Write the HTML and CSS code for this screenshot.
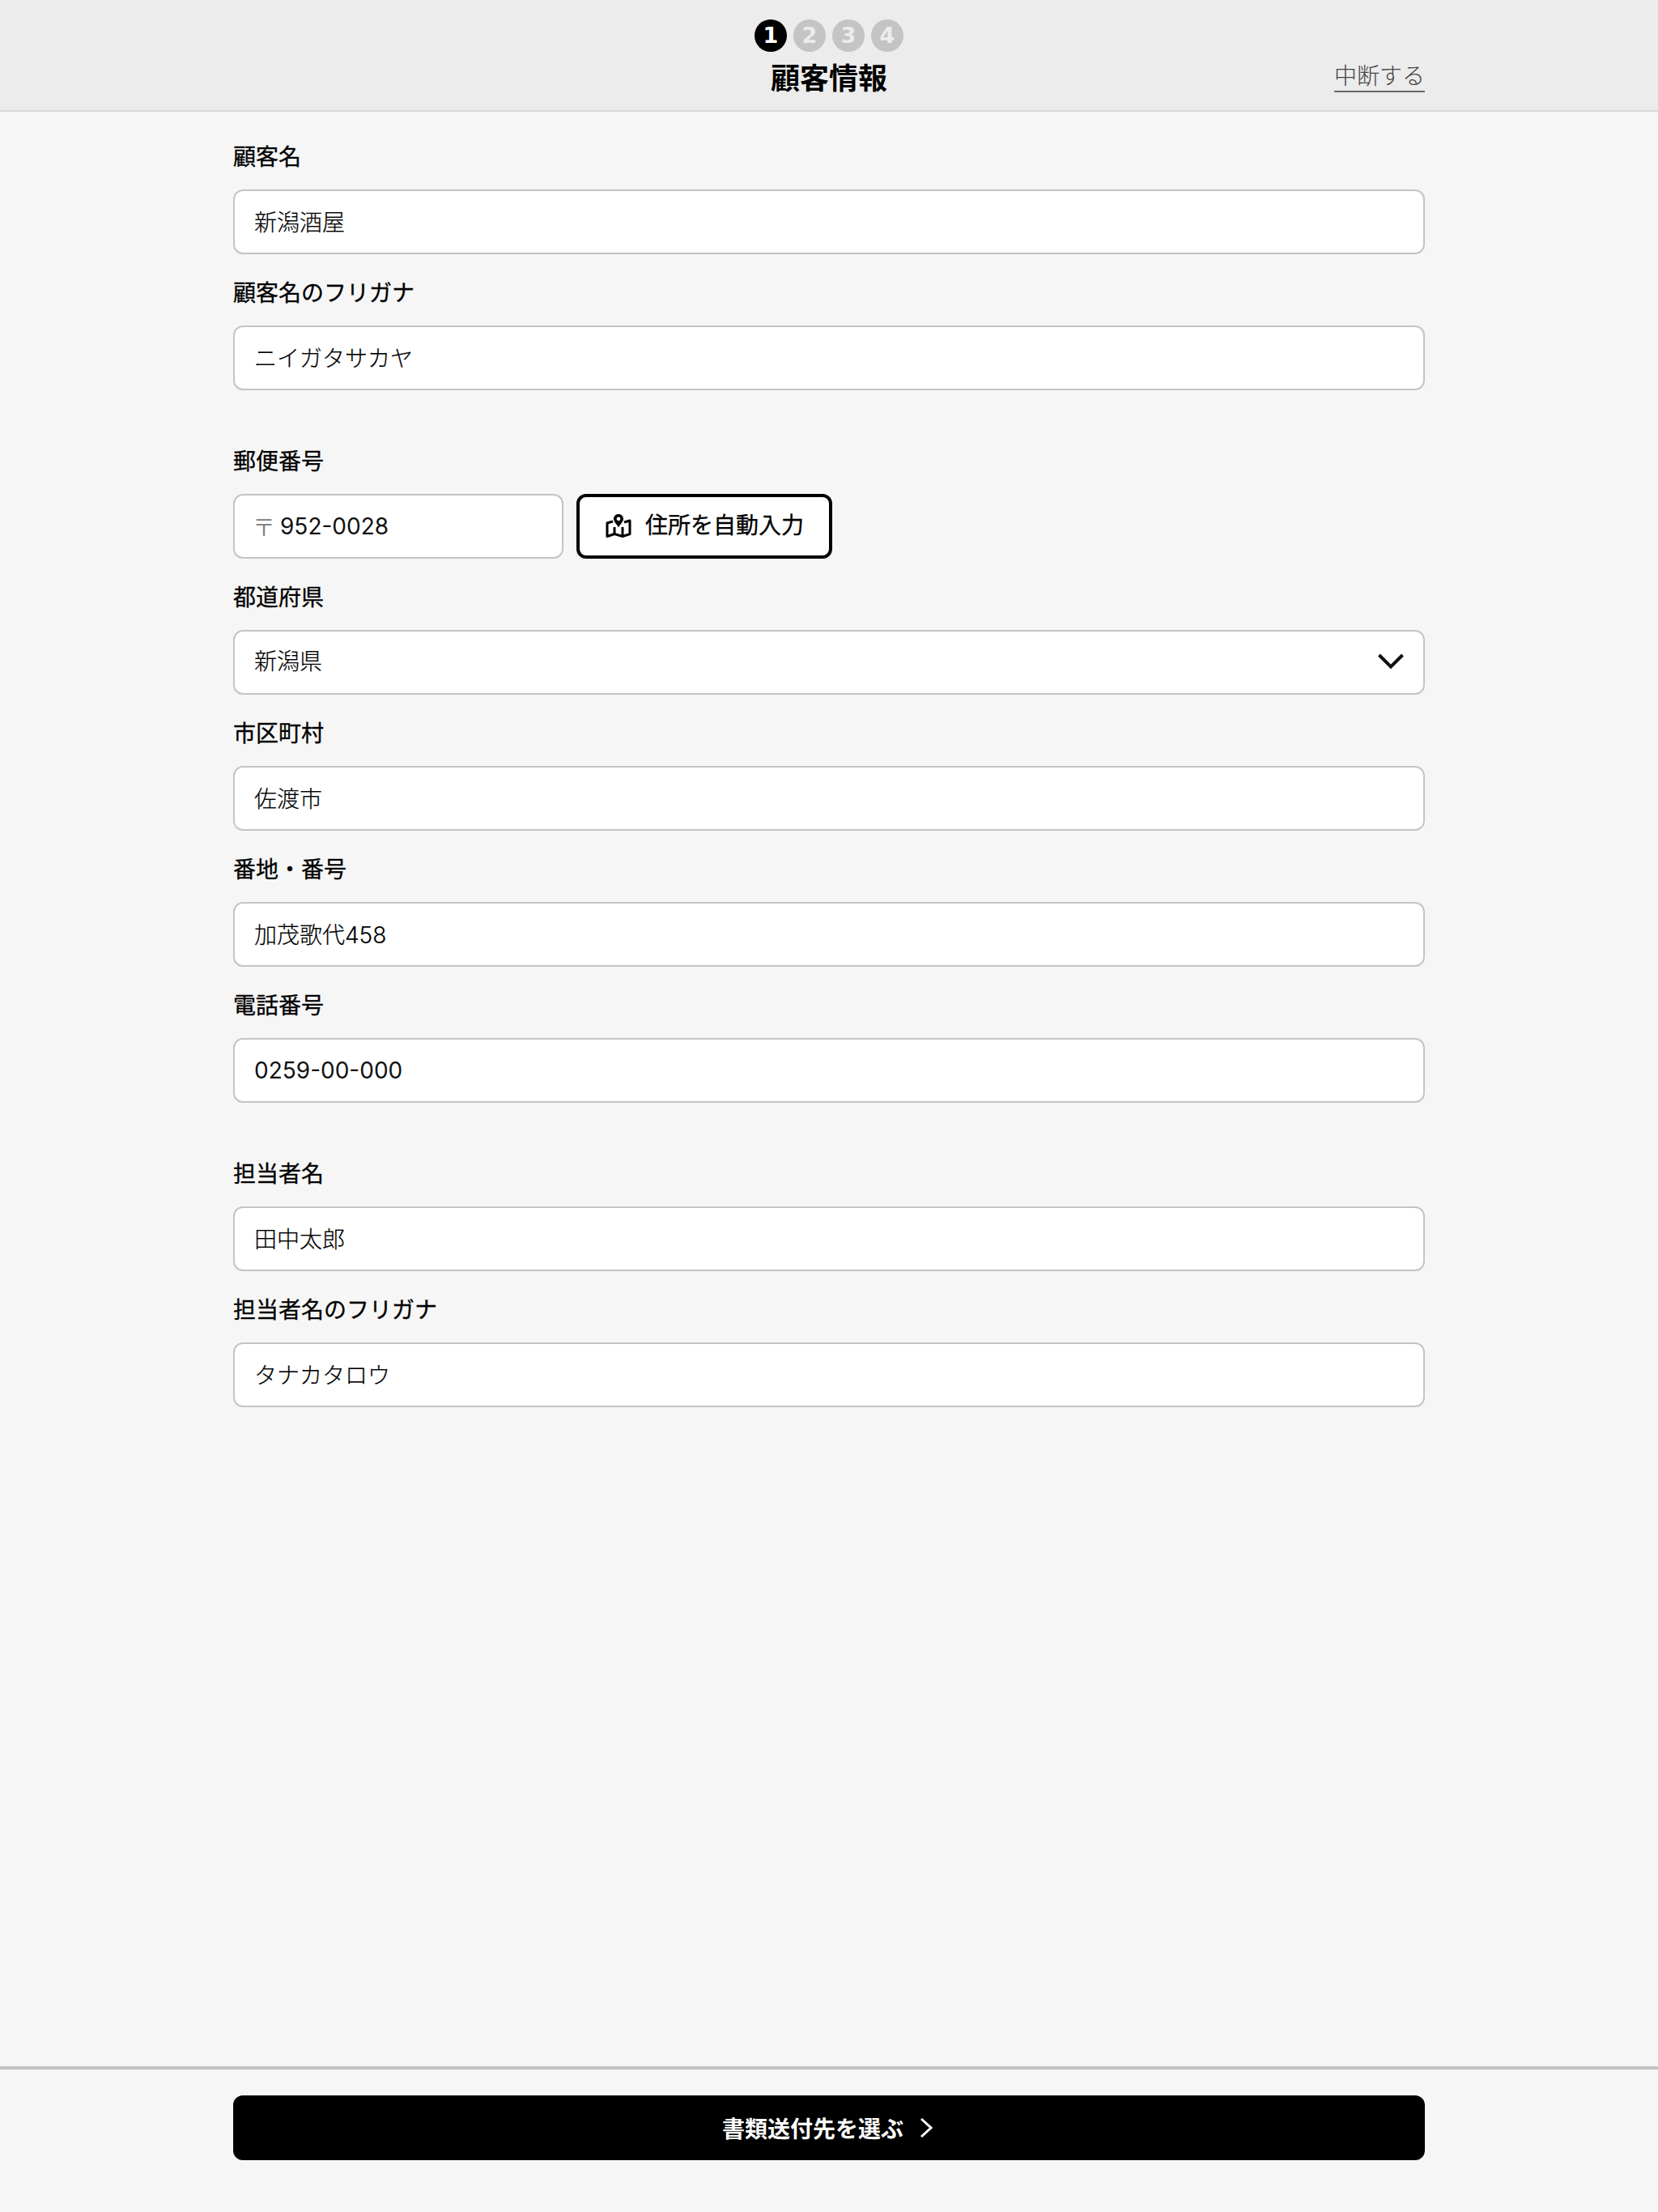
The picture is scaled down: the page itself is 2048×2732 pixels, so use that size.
FILE: index.html
```html
<!DOCTYPE html>
<html lang="ja">
<head>
    <meta charset="UTF-8">
    <meta name="viewport" content="width=device-width, initial-scale=1.0">
    <title>顧客情報</title>
    <link rel="stylesheet" href="styles.css">
</head>
<body>
    <header class="header">
        <div class="header-inner">
            <div class="header-side"></div>
            <div class="header-center">
                <ol class="steps">
                    <li class="step step-active">1</li>
                    <li class="step">2</li>
                    <li class="step">3</li>
                    <li class="step">4</li>
                </ol>
                <h1 class="title">顧客情報</h1>
            </div>
            <div class="header-side header-side-right">
                <a class="abort" href="#">中断する</a>
            </div>
        </div>
    </header>

    <main class="form">
        <section class="group">
            <div class="field">
                <label class="label" for="name">顧客名</label>
                <input class="input" id="name" type="text" value="新潟酒屋">
            </div>
            <div class="field">
                <label class="label" for="name-kana">顧客名のフリガナ</label>
                <input class="input" id="name-kana" type="text" value="ニイガタサカヤ">
            </div>
        </section>

        <section class="group">
            <div class="field">
                <label class="label" for="zip">郵便番号</label>
                <div class="zip-row">
                    <div class="zip-box">
                        <span class="zip-mark">〒</span>
                        <input class="zip-input" id="zip" type="text" value="952-0028">
                    </div>
                    <button class="zip-button" type="button">
                        <svg class="map-icon" viewBox="0 0 32 32" width="32" height="32" fill="none" stroke="#000" stroke-width="3">
                            <path d="M9 10 L2 12 V28.5 L11 25.5 L21 28.5 L30 25.5 V9 L23 11" stroke-linejoin="round"/>
                            <path d="M11 17 V25.5 M21 17 V28.5"/>
                            <path d="M16 1 C12.4 1 10 3.6 10 6.8 C10 10.6 14.2 14 16 17.5 C17.8 14 22 10.6 22 6.8 C22 3.6 19.6 1 16 1 Z" fill="#000" stroke="none"/>
                            <circle cx="16" cy="6.8" r="2.4" fill="#fff" stroke="none"/>
                        </svg>
                        <span>住所を自動入力</span>
                    </button>
                </div>
            </div>
            <div class="field">
                <label class="label" for="pref">都道府県</label>
                <div class="select-wrap">
                    <select class="input select" id="pref">
                        <option>新潟県</option>
                    </select>
                    <svg class="select-arrow" viewBox="0 0 32 20" width="32" height="20" fill="none" stroke="#111" stroke-width="4">
                        <path d="M1.5 2 L16 16.5 L30.5 2"/>
                    </svg>
                </div>
            </div>
            <div class="field">
                <label class="label" for="city">市区町村</label>
                <input class="input" id="city" type="text" value="佐渡市">
            </div>
            <div class="field">
                <label class="label" for="addr">番地・番号</label>
                <input class="input" id="addr" type="text" value="加茂歌代458">
            </div>
            <div class="field">
                <label class="label" for="tel">電話番号</label>
                <input class="input input-num" id="tel" type="text" value="0259-00-000">
            </div>
        </section>

        <section class="group">
            <div class="field">
                <label class="label" for="staff">担当者名</label>
                <input class="input" id="staff" type="text" value="田中太郎">
            </div>
            <div class="field">
                <label class="label" for="staff-kana">担当者名のフリガナ</label>
                <input class="input" id="staff-kana" type="text" value="タナカタロウ">
            </div>
        </section>
    </main>

    <footer class="footer">
        <button class="next" type="button">
            <span>書類送付先を選ぶ</span>
            <svg viewBox="0 0 16 26" width="16" height="26" fill="none" stroke="#fff" stroke-width="3">
                <path d="M2 2 L14 13 L2 24"/>
            </svg>
        </button>
    </footer>
</body>
</html>
```

FILE: styles.css
```css
* {
    box-sizing: border-box;
}
body {
    margin: 0;
    min-height: 2732px;
    display: flex;
    flex-direction: column;
    background: #f6f6f6;
    color: #000;
    font-family: Inter, "Noto Sans CJK JP", sans-serif;
    font-size: 28px;
}
.header {
    height: 138px;
    background: #ececec;
    border-bottom: 2px solid #d6d6d6;
}
.header-inner {
    width: 1472px;
    height: 136px;
    margin: 0 auto;
    display: flex;
}
.header-side {
    flex: 1;
}
.header-side-right {
    display: flex;
    justify-content: flex-end;
    align-items: flex-start;
    padding-top: 74px;
}
.header-center {
    display: flex;
    flex-direction: column;
    align-items: center;
    padding-top: 24px;
}
.steps {
    display: flex;
    gap: 8px;
    margin: 0;
    padding: 0;
    list-style: none;
}
.step {
    width: 40px;
    height: 40px;
    border-radius: 50%;
    background: #c4c4c4;
    color: #ececec;
    font-family: "DejaVu Sans", sans-serif;
    font-size: 27px;
    font-weight: 700;
    line-height: 40px;
    text-align: center;
}
.step-active {
    background: #000;
    color: #fff;
}
.title {
    margin: 11px 0 0;
    font-size: 36px;
    font-weight: 700;
    line-height: 44px;
}
.abort {
    height: 40px;
    color: #444;
    font-size: 28px;
    font-weight: 300;
    line-height: 40px;
    text-decoration: none;
    border-bottom: 2px solid #666;
}
.form {
    flex: 1;
    width: 1472px;
    margin: 0 auto;
    padding-top: 36px;
}
.group {
    margin-bottom: 68px;
}
.field {
    margin-bottom: 28px;
}
.group .field:last-child {
    margin-bottom: 0;
}
.label {
    display: block;
    height: 40px;
    margin-bottom: 20px;
    font-size: 28px;
    font-weight: 400;
    line-height: 40px;
    -webkit-text-stroke: 0.3px #000;
}
.input {
    display: block;
    width: 100%;
    height: 80px;
    padding: 0 24px 3px;
    background: #fff;
    border: 2px solid #c4c4c4;
    border-radius: 12px;
    color: #000;
    font-family: inherit;
    font-size: 28px;
    font-weight: 300;
    -webkit-text-stroke: 0.2px #000;
    outline: none;
}
.input-num {
    padding-bottom: 0;
    font-weight: 400;
    color: #111;
    -webkit-text-stroke: 0;
}
.select {
    appearance: none;
}
.select-wrap {
    position: relative;
}
.select-arrow {
    position: absolute;
    top: 29px;
    right: 26px;
}
.zip-row {
    display: flex;
    gap: 16px;
}
.zip-box {
    display: flex;
    align-items: center;
    width: 408px;
    height: 80px;
    padding: 0 24px;
    background: #fff;
    border: 2px solid #c4c4c4;
    border-radius: 12px;
}
.zip-mark {
    color: #777;
    width: 32px;
    margin-left: -2px;
    margin-right: 2px;
    font-size: 28px;
    font-weight: 300;
}
.zip-input {
    flex: 1;
    min-width: 0;
    padding: 0;
    border: 0;
    background: none;
    color: #111;
    font-family: inherit;
    font-size: 28px;
    font-weight: 400;
    outline: none;
}
.zip-button {
    display: flex;
    align-items: center;
    gap: 17px;
    width: 316px;
    height: 80px;
    padding: 0 0 0 32px;
    background: #fff;
    border: 4px solid #000;
    border-radius: 12px;
    color: #000;
    font-family: inherit;
    font-size: 28px;
    font-weight: 400;
    -webkit-text-stroke: 0.3px #000;
}
.zip-button span {
    position: relative;
    top: -3px;
}
.map-icon {
    flex: none;
}
.footer {
    height: 180px;
    border-top: 4px solid #c2c2c2;
    padding-top: 32px;
}
.next {
    display: flex;
    align-items: center;
    justify-content: center;
    gap: 20px;
    width: 1472px;
    height: 80px;
    margin: 0 auto;
    padding: 0 4px 0 0;
    background: #000;
    border: 0;
    border-radius: 12px;
    color: #fff;
    font-family: inherit;
    font-size: 28px;
    font-weight: 700;
}
```
